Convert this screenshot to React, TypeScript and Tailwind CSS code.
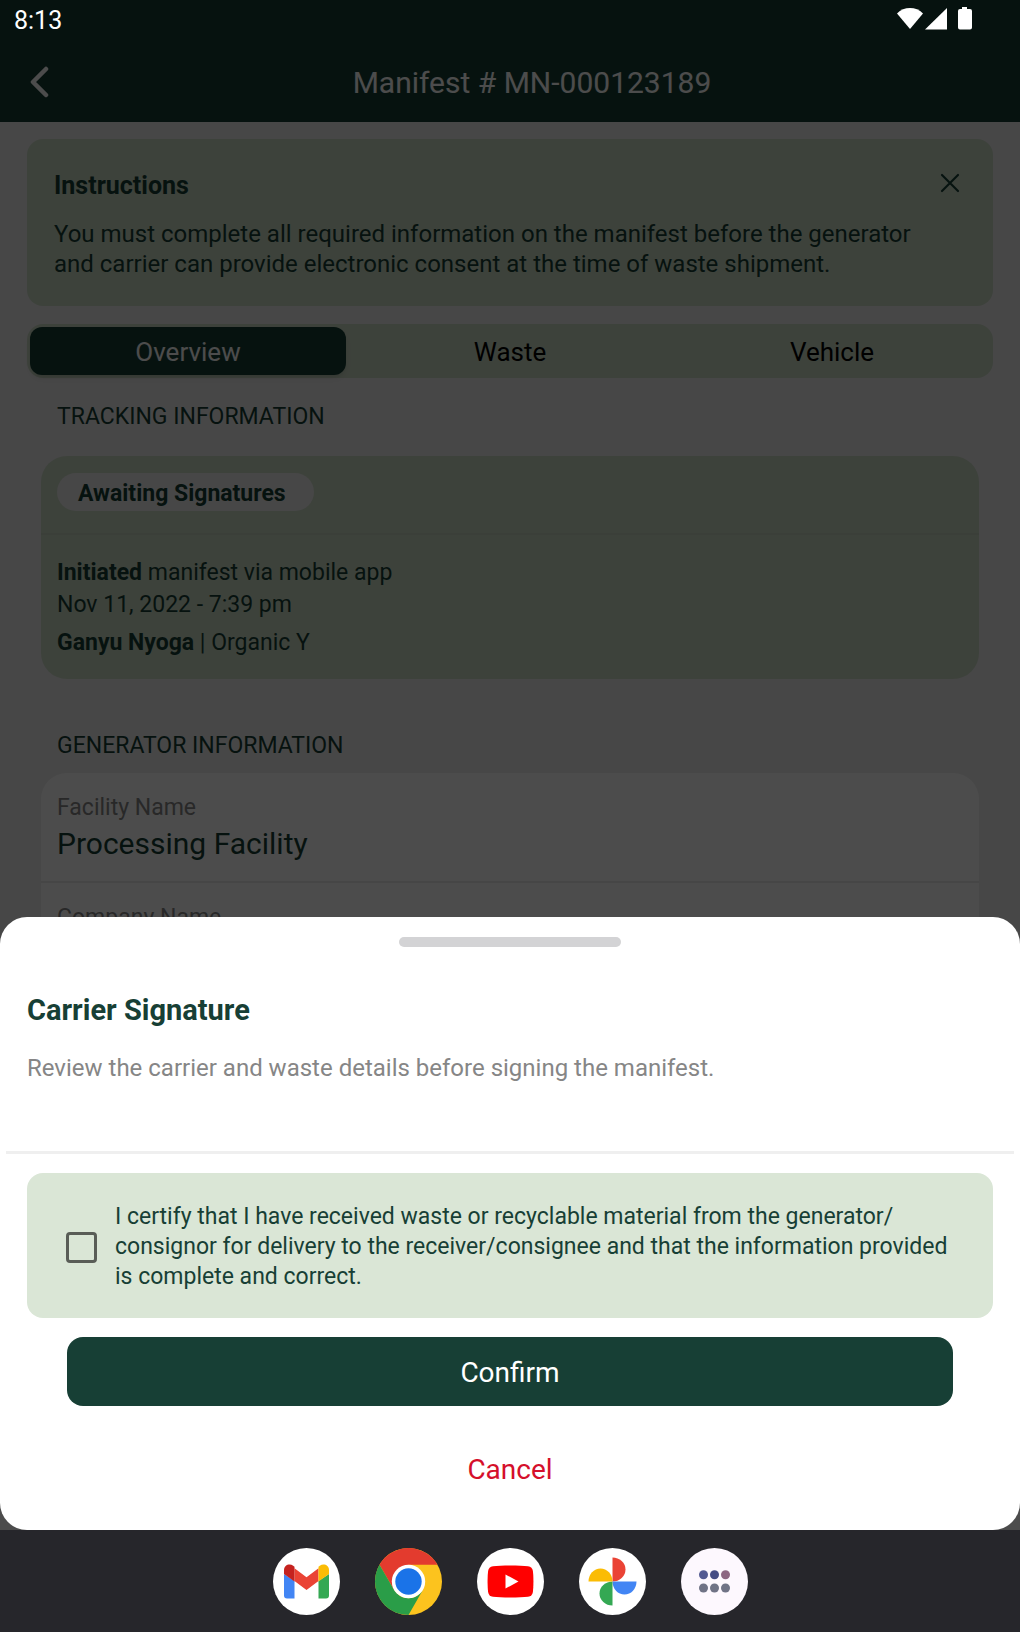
import { useState } from "react";

const tabs = ["Overview", "Waste", "Vehicle"];

const generatorFields = [
  { id: 1, label: "Facility Name", value: "Processing Facility" },
  { id: 2, label: "Company Name", value: "" },
];

const GmailIcon = () => (
  <svg viewBox="0 0 67 67" className="size-full" aria-hidden>
    <circle cx="33.5" cy="33.5" r="33.5" fill="#fff" />
    <path d="M11 26l10.500 7v17.500H14a3 3 0 0 1-3-3z" fill="#4285f4" />
    <path d="M56 26l-10.500 7v17.500H53a3 3 0 0 0 3-3z" fill="#34a853" />
    <path d="M21.500 20.300l12 9 12-9V33l-12 9-12-9z" fill="#ea4335" />
    <path d="M11 26v-4c0-5 5.500-7 9.200-4.300l1.300 1V33.500z" fill="#c5221f" />
    <path d="M56 26v-4c0-5-5.500-7-9.200-4.300l-1.300 1V33.500z" fill="#fbbc04" />
  </svg>
);

const ChromeIcon = () => (
  <svg viewBox="0 0 67 67" className="size-full" aria-hidden>
    <circle cx="33.5" cy="33.5" r="33.5" fill="#fcc31e" />
    <path
      d="M33.500 33.500L19 41.800 4.500 16.750A33.500 33.500 0 0 1 62.500 16.750H33.500z"
      fill="#e33b2e"
    />
    <path
      d="M4.500 16.750L19 41.800A16.700 16.700 0 0 0 48 41.800L33.500 67A33.500 33.500 0 0 1 4.500 16.750z"
      fill="#2a9d48"
    />
    <circle cx="33.5" cy="33.5" r="16.7" fill="#fff" />
    <circle cx="33.5" cy="33.5" r="13.2" fill="#1a73e8" />
  </svg>
);

const YoutubeIcon = () => (
  <svg viewBox="0 0 67 67" className="size-full" aria-hidden>
    <circle cx="33.5" cy="33.5" r="33.5" fill="#fff" />
    <path
      d="M16 18.200c8-.9 27-.9 35 0 3 .4 4.500 2 4.900 4.800.7 6 .7 15 0 21-.4 2.800-1.900 4.400-4.900 4.800-8 .9-27 .9-35 0-3-.4-4.500-2-4.900-4.800-.7-6-.7-15 0-21 .4-2.800 1.900-4.400 4.900-4.800z"
      fill="#f00"
    />
    <path d="M28.500 26.500v14l13-7z" fill="#fff" />
  </svg>
);

const PhotosIcon = () => (
  <svg viewBox="0 0 67 67" className="size-full" aria-hidden>
    <circle cx="33.5" cy="33.5" r="33.5" fill="#fff" />
    <path d="M33.500 9.500a13 12 0 0 1 0 24z" fill="#ea4335" />
    <path d="M57.500 33.500a12 13 0 0 1-24 0z" fill="#4285f4" />
    <path d="M33.500 57.500a13 12 0 0 1 0-24z" fill="#34a853" />
    <path d="M9.500 33.500a12 13 0 0 1 24 0z" fill="#fbbc04" />
  </svg>
);

const AllAppsIcon = () => (
  <svg viewBox="0 0 67 67" className="size-full" aria-hidden>
    <circle cx="33.5" cy="33.5" r="33.5" fill="#fdf8fe" />
    <circle cx="22.500" cy="26.800" r="4.500" fill="#535a92" />
    <circle cx="33.500" cy="26.800" r="4.500" fill="#454c85" />
    <circle cx="44.500" cy="26.800" r="4.500" fill="#8d6682" />
    <circle cx="22.500" cy="40" r="4.500" fill="#707386" />
    <circle cx="33.500" cy="40" r="4.500" fill="#707386" />
    <circle cx="44.500" cy="40" r="4.500" fill="#707386" />
  </svg>
);

const dockApps = [
  { id: 1, name: "Gmail", Icon: GmailIcon },
  { id: 2, name: "Chrome", Icon: ChromeIcon },
  { id: 3, name: "YouTube", Icon: YoutubeIcon },
  { id: 4, name: "Photos", Icon: PhotosIcon },
  { id: 5, name: "All apps", Icon: AllAppsIcon },
];

const StatusBar = () => (
  <div className="z-10 col-start-1 row-start-1 flex h-[42px] items-center justify-between self-start pr-[47px] pl-[14px] text-[25px] text-white">
    <span>8:13</span>
    <svg width="76" height="28" viewBox="0 0 76 28" aria-hidden>
      <path d="M0 6.500C7-.7 19-.7 26 6.500L13 22z" fill="#fff" />
      <path d="M28 22.500L50 1v21.500z" fill="#fff" />
      <path
        d="M65 0h5v2h3a2 2 0 0 1 2 2v16.500a2 2 0 0 1-2 2H63a2 2 0 0 1-2-2V4a2 2 0 0 1 2-2h2z"
        fill="#fff"
      />
    </svg>
  </div>
);

const ManifestPage = () => (
  <div className="col-start-1 row-start-1 flex flex-col bg-[#eeeeee] text-[#173f35]">
    <header className="flex items-center bg-[#173f35] pt-11 pr-3 pl-6 text-white">
      <button type="button" aria-label="Back" className="grid w-8 place-content-center">
        <svg width="20" height="34" viewBox="0 0 20 34" fill="none" aria-hidden>
          <path
            d="M16 3L3 16l13 13"
            stroke="#fff"
            strokeWidth="4.500"
            strokeLinecap="round"
            strokeLinejoin="round"
          />
        </svg>
      </button>
      <h1 className="flex-1 text-center text-[30px] leading-[78px]">
        Manifest # MN-000123189
      </h1>
    </header>

    <main className="flex-1 px-[27px] pt-[17px]">
      {/* Instructions */}
      <section className="rounded-2xl bg-[#cddcc7] px-[27px] pt-8 pb-[27px]">
        <div className="flex items-start justify-between">
          <h2 className="text-[25px] leading-[30px] font-bold">Instructions</h2>
          <button type="button" aria-label="Dismiss" className="grid h-6 w-8 place-content-center">
            <svg width="20" height="20" viewBox="0 0 20 20" aria-hidden>
              <path d="M2 2l16 16M18 2L2 18" stroke="#173f35" strokeWidth="2.200" strokeLinecap="round" />
            </svg>
          </button>
        </div>
        <p className="mt-[18px] pr-8 text-2xl leading-[30px]">
          You must complete all required information on the manifest before the
          generator and carrier can provide electronic consent at the time of
          waste shipment.
        </p>
      </section>

      {/* Tabs */}
      <div
        role="tablist"
        className="mt-[18px] grid grid-cols-3 gap-[6px] rounded-2xl bg-[#cddcc7] p-[3px] text-[26px] leading-[46px]"
      >
        {tabs.map((tab, i) => (
          <button
            key={tab}
            type="button"
            role="tab"
            aria-selected={i === 0}
            className={
              i === 0
                ? "rounded-xl bg-[#173f35] pt-[2px] text-white shadow-md"
                : "pt-[2px] text-black"
            }
          >
            {tab}
          </button>
        ))}
      </div>

      {/* Tracking */}
      <section className="mt-[25px] px-[14px]">
        <h2 className="px-4 text-[23px] leading-7">TRACKING INFORMATION</h2>
        <div className="mt-[25px] rounded-[26px] bg-[#cddcc7] text-[23px]">
          <div className="border-b-2 border-[#c5d3c0] px-4 pt-[17px] pb-[22px]">
            <span className="inline-block rounded-full bg-[#eeeeee] pt-1 pr-7 pl-[21px] align-top leading-[34px] font-bold">
              Awaiting Signatures
            </span>
          </div>
          <div className="px-4 pt-[22px] pb-5 leading-8">
            <p>
              <b>Initiated</b> manifest via mobile app
            </p>
            <p>Nov 11, 2022 - 7:39 pm</p>
            <p className="mt-[6px]">
              <b>Ganyu Nyoga</b> | Organic Y
            </p>
          </div>
        </div>
      </section>

      {/* Generator */}
      <section className="mt-[53px] px-[14px]">
        <h2 className="px-4 text-[23px] leading-7">GENERATOR INFORMATION</h2>
        <dl className="mt-[13px] divide-y-2 divide-[#ebebeb] rounded-t-[26px] bg-white">
          {generatorFields.map((field) => (
            <div key={field.id} className="px-4 pt-[21px] pb-[19px]">
              <dt className="text-[23px] leading-7 text-[#888888]">{field.label}</dt>
              <dd className="mt-1 text-[30px] leading-9">{field.value}</dd>
            </div>
          ))}
        </dl>
      </section>
    </main>
    <footer className="h-16 bg-white" />
  </div>
);

const SignatureSheet = () => {
  const [certified, setCertified] = useState(false);

  return (
    <div className="col-start-1 row-start-1 flex flex-col justify-end bg-black/70">
      <section
        role="dialog"
        aria-labelledby="sheet-title"
        className="flex flex-col rounded-[27px] bg-white pt-5 pb-[30px]"
      >
        <div className="h-[10px] w-[222px] self-center rounded-full bg-[#d3d3d5]" />

        <div className="mt-[46px] px-[27px]">
          <h2 id="sheet-title" className="text-[29px] leading-[34px] font-bold text-[#173f35]">
            Carrier Signature
          </h2>
          <p className="mt-[26px] text-2xl leading-[30px] text-[#868686]">
            Review the carrier and waste details before signing the manifest.
          </p>
        </div>

        <hr className="mx-[6px] mt-[68px] border-t-[3px] border-[#efefef]" />

        <label className="mx-[27px] mt-[19px] flex items-center gap-[18px] rounded-2xl bg-[#dae6d6] pt-[29px] pr-8 pb-[26px] pl-[39px]">
          <input
            type="checkbox"
            checked={certified}
            onChange={(e) => setCertified(e.target.checked)}
            className="size-[31px] shrink-0 appearance-none rounded-[4px] border-[3px] border-[#595d57] checked:bg-[#173f35]"
          />
          <span className="text-[23px] leading-[30px] text-[#173f35]">
            I certify that I have received waste or recyclable material from the
            generator/<wbr />
            consignor for delivery to the receiver/consignee and that the
            information provided is complete and correct.
          </span>
        </label>

        <button
          type="button"
          className="mx-[67px] mt-[19px] rounded-2xl bg-[#173f35] pt-[3px] text-[28px] leading-[66px] text-white"
        >
          Confirm
        </button>
        <button
          type="button"
          className="mx-[67px] mt-[34px] text-[28px] leading-[60px] text-[#d50f2b]"
        >
          Cancel
        </button>
      </section>
    </div>
  );
};

const Dock = () => (
  <nav className="flex h-[102px] items-center justify-center gap-[35px]">
    {dockApps.map(({ id, name, Icon }) => (
      <button key={id} type="button" aria-label={name} className="size-[67px]">
        <Icon />
      </button>
    ))}
  </nav>
);

const App = () => {
  return (
    <div className="flex min-h-screen flex-col bg-[#26262b] font-[Roboto,sans-serif]">
      <div className="grid flex-1">
        <ManifestPage />
        <SignatureSheet />
        <StatusBar />
      </div>
      <Dock />
    </div>
  );
};

export default App;
